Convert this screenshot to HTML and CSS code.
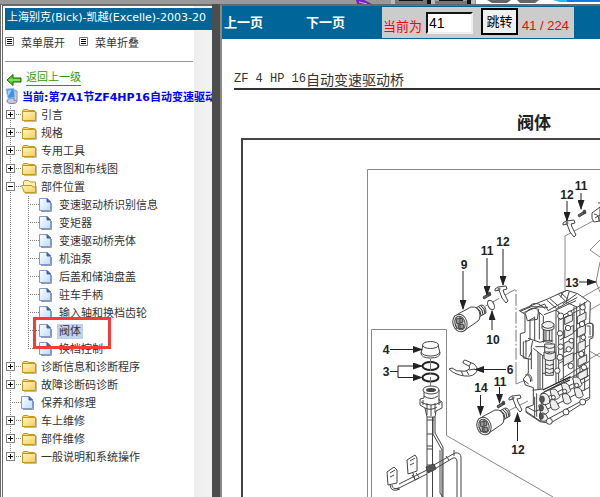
FILE: index.html
```html
<!DOCTYPE html>
<html lang="zh-CN">
<head>
<meta charset="UTF-8">
<meta name="viewport" content="width=device-width, initial-scale=1.0">
<title>上海别克(Bick)-凯越(Excelle)</title>
<link rel="stylesheet" href="styles.css">
</head>
<body>

<!-- shared icons -->
<svg class="defs" width="0" height="0" aria-hidden="true">
  <defs>
    <linearGradient id="gold" x1="0" y1="0" x2="1" y2="1">
      <stop offset="0" stop-color="#fff8c4"/>
      <stop offset="1" stop-color="#f7cb55"/>
    </linearGradient>
    <linearGradient id="sheet" x1="0" y1="0" x2="1" y2="1">
      <stop offset="0" stop-color="#ffffff"/>
      <stop offset="1" stop-color="#bcdcfb"/>
    </linearGradient>
  </defs>
  <symbol id="folder" viewBox="0 0 18 18">
    <path d="M3 15.5h12.500V6" fill="none" stroke="#bbb"/>
    <path d="M1.500 5l1-1.500h4L8 4.500h5.500v10h-12z" fill="#f6d878" stroke="#c9971e"/>
    <path d="M1.500 5.500h13v9h-13z" fill="url(#gold)" stroke="#c9971e"/>
  </symbol>
  <symbol id="folder-open" viewBox="0 0 18 18">
    <path d="M4 15.5h11.500V8" fill="none" stroke="#bbb"/>
    <path d="M2.500 13V4l1-1.500h4L9 4h5.500v10h-10z" fill="#fff3b0" stroke="#c9971e"/>
    <path d="M.500 7.500h10.500l1 1.500h2.500v5.500h-11z" fill="url(#gold)" stroke="#c9971e"/>
  </symbol>
  <symbol id="page" viewBox="0 0 18 18">
    <path d="M2 15.500h10.500V7" fill="none" stroke="#999"/>
    <path d="M.500 2.500h7.500l3.500 3.500v8.500h-11z" fill="url(#sheet)" stroke="#7d9cc9"/>
    <path d="M8 2.500v3.500h3.500z" fill="#3d62a8" stroke="#3d62a8"/>
  </symbol>
  <symbol id="list" viewBox="0 0 9 9">
    <path d="M.500.500h8v8h-8z" fill="#fff" stroke="#777"/>
    <path d="M2 2.500h5M2 4.500h5M2 6.500h5" stroke="#000"/>
  </symbol>
  <symbol id="back" viewBox="0 0 16 14">
    <path d="M1 7l6-5.500v3.500h8v4H7v3.500z" fill="#55d62c" stroke="#1c5c0c"/>
    <path d="M3 7h11" stroke="#9bf06c"/>
  </symbol>
  <symbol id="computer" viewBox="0 0 14 18">
    <ellipse cx="7" cy="14" rx="5" ry="2.500" fill="#c9cbe0" stroke="#777a9c"/>
    <path d="M10 3l2 1v9l-3 1z" fill="#cfd3df" stroke="#8b92a5"/>
    <path d="M1 2l8-.500 1 9-7 1z" fill="#3c93ea" stroke="#a9bfda"/>
    <path d="M2.500 3.500l4-.500-3 6z" fill="#9fd4ff"/>
  </symbol>
</svg>

<div class="topstrip">
  <svg width="600" height="4" viewBox="0 0 600 4" aria-hidden="true">
    <path d="M356 0h8l8 4h-15z" fill="#7a1fc4"/>
    <path d="M359 2l8 2" stroke="#d9b3ff"/>
    <path d="M391 0h39v4h-39z" fill="#bbb"/>
    <path d="M395 0h32v4h-32z" fill="#777"/>
    <path d="M399 0h24v1h-24zM427 0h4v4h-4zM439 0h24v1h-24zM467 0h4v4h-4z" fill="#111"/>
    <path d="M431 0h4v4h-4zM471 0h4v4h-4z" fill="#bbb"/>
    <path d="M435 1h32v3h-32z" fill="#777"/>
    <path d="M476 0h124v4H476z" fill="#fff"/>
    <path d="M487 0h24l-4 3h-15zM517 0h22l-4 3h-15z" fill="#666"/>
    <path d="M553 0h47v2h-40z" fill="#27b9e8"/>
    <path d="M567 0h33v2h-33z" fill="#1379dd"/>
  </svg>
</div>

<div class="frames">
  <nav class="sidebar">
    <div class="sidebar-body">
      <div class="car">上海别克(Bick)-凯越(Excelle)-2003-20</div>
      <div class="menu-actions">
        <a href="#"><svg width="9" height="9"><use href="#list"/></svg>菜单展开</a>
        <a href="#"><svg width="9" height="9"><use href="#list"/></svg>菜单折叠</a>
      </div>
      <div class="up">
        <svg width="16" height="14"><use href="#back"/></svg>
        <a href="#">返回上一级</a>
      </div>
      <div class="current">
        <svg width="14" height="18"><use href="#computer"/></svg>
        <a href="#">当前:第7A1节ZF4HP16自动变速驱动</a>
      </div>
      <ul class="tree">
        <li><span class="join"><button class="toggle plus" aria-label="展开"></button></span><svg class="icon"><use href="#folder"/></svg><a href="#">引言</a></li>
        <li><span class="join"><button class="toggle plus" aria-label="展开"></button></span><svg class="icon"><use href="#folder"/></svg><a href="#">规格</a></li>
        <li><span class="join"><button class="toggle plus" aria-label="展开"></button></span><svg class="icon"><use href="#folder"/></svg><a href="#">专用工具</a></li>
        <li><span class="join"><button class="toggle plus" aria-label="展开"></button></span><svg class="icon"><use href="#folder"/></svg><a href="#">示意图和布线图</a></li>
        <li><span class="join"><button class="toggle" aria-label="折叠"></button></span><svg class="icon"><use href="#folder-open"/></svg><a href="#">部件位置</a>
          <ul>
            <li><span class="join"></span><svg class="icon"><use href="#page"/></svg><a href="#">变速驱动桥识别信息</a></li>
            <li><span class="join"></span><svg class="icon"><use href="#page"/></svg><a href="#">变矩器</a></li>
            <li><span class="join"></span><svg class="icon"><use href="#page"/></svg><a href="#">变速驱动桥壳体</a></li>
            <li><span class="join"></span><svg class="icon"><use href="#page"/></svg><a href="#">机油泵</a></li>
            <li><span class="join"></span><svg class="icon"><use href="#page"/></svg><a href="#">后盖和储油盘盖</a></li>
            <li><span class="join"></span><svg class="icon"><use href="#page"/></svg><a href="#">驻车手柄</a></li>
            <li><span class="join"></span><svg class="icon"><use href="#page"/></svg><a href="#">输入轴和换档齿轮</a></li>
            <li class="marked"><span class="join"></span><svg class="icon"><use href="#page"/></svg><a href="#" class="selected">阀体</a></li>
            <li><span class="join last"></span><svg class="icon"><use href="#page"/></svg><a href="#">换档控制</a></li>
          </ul>
        </li>
        <li><span class="join"><button class="toggle plus" aria-label="展开"></button></span><svg class="icon"><use href="#folder"/></svg><a href="#">诊断信息和诊断程序</a></li>
        <li><span class="join"><button class="toggle plus" aria-label="展开"></button></span><svg class="icon"><use href="#folder"/></svg><a href="#">故障诊断码诊断</a></li>
        <li><span class="join"></span><svg class="icon"><use href="#page"/></svg><a href="#">保养和修理</a></li>
        <li><span class="join"><button class="toggle plus" aria-label="展开"></button></span><svg class="icon"><use href="#folder"/></svg><a href="#">车上维修</a></li>
        <li><span class="join"><button class="toggle plus" aria-label="展开"></button></span><svg class="icon"><use href="#folder"/></svg><a href="#">部件维修</a></li>
        <li><span class="join last"><button class="toggle plus" aria-label="展开"></button></span><svg class="icon"><use href="#folder"/></svg><a href="#">一般说明和系统操作</a></li>
      </ul>
    </div>
  </nav>

  <div class="splitter"></div>

  <main class="viewer">
    <div class="toolbar">
      <a href="#">上一页</a>
      <a href="#">下一页</a>
      <form class="jump">
        <label for="page-no">当前为</label>
        <input type="text" id="page-no" value="41">
        <button type="button">跳转</button>
        <span class="count">41 / 224</span>
      </form>
    </div>

    <div class="paper">
      <div class="running-head"><span>ZF 4 HP 16</span>自动变速驱动桥</div>
      <h1>阀体</h1>
      <svg class="figure" width="600" height="500" viewBox="234 138 600 500" role="img" aria-label="阀体分解图">
        <defs>
          <marker id="arrow" viewBox="0 0 10 6" refX="9" refY="3" markerWidth="10" markerHeight="7" markerUnits="userSpaceOnUse" orient="auto" preserveAspectRatio="none">
            <path d="M0 0l10 3-10 3z" fill="#222"/>
          </marker>
          <g id="clip">
            <path d="M495 289l3-2 8-1 1 3-4 1 1 3 4 8-2 2-4-5-3-8-4 1z"/>
            <circle cx="499" cy="289" r="1"/>
          </g>
          <g id="screw">
            <path d="M483 297l5-3 1 2-5 3z" fill="#666"/>
            <path d="M488 293l2-1 1 3-2 1z" fill="#444"/>
          </g>
          <!-- solenoid body -->
          <g id="solenoid">
            <path d="M474 309l7-4q5 0 5 8l-7 4z" fill="#ddd"/>
            <path d="M477 308q4 2 4 8M479 307q4 2 4 8M481 306q4 2 4 8" fill="none"/>
            <path d="M458 314l13-7q8-1 9 8 0 5-2 6l-13 9z"/>
            <ellipse cx="460" cy="323" rx="7" ry="9" transform="rotate(-18 460 323)"/>
            <ellipse cx="460" cy="323" rx="5" ry="7" transform="rotate(-18 460 323)" fill="#ccc"/>
            <path d="M456 319l6-1 1 4-6 2zM458 325l5-1 1 4-5 1z" fill="#999"/>
            <path d="M455 324l2 5M460 317v12" fill="none"/>
          </g>
        </defs>

        <!-- frames -->
        <path d="M242 638V139h592" class="frame"/>
        <path d="M367.500 638V169.500H834" class="thin"/>
        <path d="M371.500 638V329.500h75v106L553 497" class="thin"/>

        <!-- assembly axes -->
        <path d="M473 313l43-24v72" class="dash"/>
        <path d="M516 362v22l12-5M496 417l32-16M565 290v-54l28-15M600 240l-10 10 10 7M564 308l36-21M578 317l22-13M584 348l16 9M584 362l16-9M600 262l-4 20 4 10" class="thin"/>

        <use href="#solenoid" class="part"/>
        <use href="#solenoid" x="24" y="103" class="part"/>
        <use href="#clip" class="part"/>
        <use href="#clip" x="68" y="-66" class="part"/>
        <use href="#clip" x="14" y="109" class="part"/>
        <use href="#screw" class="part"/>
        <use href="#screw" x="95" y="-82" class="part"/>
        <use href="#screw" x="14" y="109" class="part"/>
        <ellipse cx="491" cy="305" rx="3" ry="5" transform="rotate(-25 491 305)" class="part"/>

        <!-- solenoid cut by the right edge -->
        <path d="M592 213l8-6v14l-6 1q-3-3-2-9z" class="part"/>
        <path d="M594 214q5 0 5 7M595 218l5-3M600 203h-2" class="part"/>

        <!-- cap 4 and rings 3 -->
        <path d="M423 345l-2 8q0 5 9.500 5t9.500-5l-2-8z" class="part"/>
        <ellipse cx="430.500" cy="345" rx="8" ry="3.500" class="part"/>
        <path d="M421 352q2 4 9.500 4t9.500-4" class="part"/>
        <ellipse cx="430.500" cy="366" rx="8" ry="4" class="ring"/>
        <ellipse cx="430.500" cy="377.500" rx="8" ry="4" class="ring"/>
        <path d="M430.500 359v27" class="dash"/>

        <!-- fork 6 -->
        <path d="M449 369l3-1q5 4 9 3 4 1 7-1 3-2 1-4l-6-3q0-3 2-3l9 4q4 3 3 7-3 6-12 5-10-1-16-7z" class="part"/>
        <path d="M461 371l2 4M466 370l3 5M471 363l-2 3M469 370l6-1" class="part"/>

        <!-- connector and wiring harness -->
        <path d="M424 390v8l-4 1v6l5 3 2 9h8l1-6 6-3v-6l-3-2v-10z" class="part"/>
        <ellipse cx="431" cy="390" rx="8" ry="4" class="part"/>
        <ellipse cx="431" cy="390" rx="5" ry="2" fill="#444"/>
        <path d="M424 396q7 5 14 0M421 402q10 6 20 0M425 408q6 3 12-1M427 403v12M431 405v11M435 403v10M423 400v5M439 399v6" class="part"/>
        <path d="M427 417v80M432.500 417v80M427 420h7M427 434h5M427 446h5M427 449h5M427 465h5" class="part"/>
        <path d="M433 417v17l9 16v47M435 417v16l8 14v50M440 450v43l3 4" class="part"/>
        <path d="M399 484l28-14M397 489l30-15M432 466l23-13q6-1 6 5v39M433 470l20-12q4-1 4 4v35" class="part"/>
        <path d="M412 475l3 4M416 473l3 4M446 456l3 4M454 450v6" class="part"/>
        <path d="M426 467l8-3 2 5-8 4z" class="part dark"/>
        <path d="M407 460l8-5 2 3v13l-9 3zM410 461l5-3M410 465l4-2" class="part"/>
        <path d="M387 472l7-5 3 3v13l-9 2zM390 473l5-3M390 477l4-2" class="part"/>
        <path d="M413 473l2 7 4-2M392 485q0 5 7 3M390 485q1 8 10 4" class="part"/>

        <!-- valve body -->
        <g class="body" transform="translate(500 280) scale(.3333)">
          <path d="M58 92l50-21 35-14 34-16 24-10 32 10 38 26-2 62 10 4v40l-10 5v178l-68 44-51 30-30-5-42-28v-14l22-8v-52l-24-8-6-18 15-18v-42l-24-12v-64l14-4v-54z"/>
          <path d="M61 94l33-14 50 2M70 98l64-26 10 20 50-28M86 84q8-18 30-12l20 14M140 60l30 26 62-34M150 56l28 25M175 42l24 24M182 38l24 22M198 32q-14 4-16 20M208 34l-10 32 30 14M230 42l-42 30"/>
          <path d="M76 100q14-22 40-12l-4 30-30 4zM90 120v60l-16 6M104 110v72M112 92l18 16v80M118 98v80M132 104l36-14 20 18"/>
          <path d="M86 122l18-10M84 175l36 12 32-10M98 182l-4 20v66M106 200h34l18-12M96 212l-10 20M100 205l28 22v100l-30 4M128 227l22-10M128 280h24M114 216v112M120 222v106"/>
          <path d="M126 132q20-16 36 0v14q-18 12-36 0zM126 138q18 14 36 0M132 150v32h24v-32M138 152v30M148 152v30M130 182q14 10 30 0M134 192h30v24h-30zM134 200q15 10 30 0M132 216q16 12 34 0v20q-17 12-34 0zM136 240v46h24v-46M136 252q12 9 26 0M136 264q12 9 26 0M136 276q12 9 26 0" class="soft"/>
          <path d="M168 90v220M176 94v215M190 106v196M222 80v240M230 78v240M240 70v252M254 66v266M168 90l60-28M190 106l72-42M178 120l60-30M180 180l84-50M178 250l88-54M180 300l88-56"/>
          <path d="M194 114l24-12v20l-24 12zM194 150l26-14v24l-26 14zM192 190l28-14v28l-28 14zM190 232l30-14v24l-30 16zM232 110l26-14v22l-26 14zM232 146l24-12v26l-24 12zM234 190l22-10v26l-22 12zM234 238l26-14v22l-26 14zM234 280l28-16v26l-28 14z" class="soft"/>
          <path d="M264 130h12l3 5v30l-4 6h-10M260 138h10v28M70 184v50l24 4M78 180v50"/>
          <circle cx="182" cy="108" r="9"/><circle cx="210" cy="100" r="7"/><circle cx="248" cy="82" r="8"/><circle cx="204" cy="144" r="8"/><circle cx="246" cy="132" r="8"/><circle cx="180" cy="160" r="8"/><circle cx="214" cy="182" r="7"/><circle cx="250" cy="172" r="7"/><circle cx="206" cy="208" r="8"/><circle cx="244" cy="222" r="8"/><circle cx="180" cy="232" r="9"/><circle cx="212" cy="258" r="8"/><circle cx="252" cy="262" r="8"/><circle cx="172" cy="272" r="8"/><circle cx="182" cy="200" r="8"/>
          <path d="M128 330l84-40M132 336l78-36" class="heavy"/>
          <path d="M122 342l144-78M126 360l142-74M122 376l146-78M118 400l150-78M130 424l136-72M80 380l24 14 24-8M78 394l44 30M104 350v62M110 340v70M70 300l16 12M76 284q16 0 16 22M84 282q12 4 12 22"/>
          <path d="M120 346q12-12 24 0l8 18q-10 14-26 8zM150 330q14-8 22 4l8 16q-10 14-24 4zM184 312q14-8 22 4l6 16q-10 14-22 4zM218 294q14-8 22 4l6 16q-10 14-22 4zM116 376q12-10 22 2l8 16q-8 14-24 6zM148 362q14-8 22 4l8 16q-10 14-24 4zM186 344q14-8 22 4l6 16q-10 14-22 4zM222 326q14-8 22 4l6 16q-10 14-22 4zM118 402q12-8 20 2l6 12q-6 12-22 6z" class="soft"/>
          <ellipse cx="126" cy="358" rx="7" ry="10" class="dark"/><ellipse cx="124" cy="384" rx="6" ry="9" class="dark"/><ellipse cx="124" cy="410" rx="6" ry="8" class="dark"/>
          <circle cx="148" cy="424" r="9"/><circle cx="198" cy="396" r="9"/><circle cx="248" cy="366" r="9"/><circle cx="160" cy="352" r="6"/><circle cx="194" cy="334" r="6"/><circle cx="230" cy="316" r="6"/>
        </g>

        <!-- callouts -->
        <g class="lead">
          <path d="M581 193v16"/>
          <path d="M567 201v20"/>
          <path d="M503 249v36"/>
          <path d="M487 258v37"/>
          <path d="M463 271v38"/>
          <path d="M492 330v-19"/>
          <path d="M579 282h17"/>
          <path d="M390 349.500h32"/>
          <path d="M398 371v-5h24"/>
          <path d="M398 371v6.500h24"/>
          <path d="M506 369.500h-31"/>
          <path d="M499.500 387v16"/>
          <path d="M480.500 395v20"/>
          <path d="M517.500 441v-28"/>
        </g>
        <path d="M390 371.500h8" stroke="#222"/>
        <g class="num">
          <text x="581" y="190">11</text>
          <text x="567" y="199">12</text>
          <text x="503" y="246">12</text>
          <text x="487" y="255">11</text>
          <text x="464" y="269">9</text>
          <text x="493" y="344">10</text>
          <text x="572" y="287">13</text>
          <text x="386" y="354">4</text>
          <text x="386" y="376">3</text>
          <text x="510" y="374">6</text>
          <text x="500" y="386">11</text>
          <text x="481" y="392">14</text>
          <text x="518" y="454">12</text>
        </g>
      </svg>
    </div>
  </main>
</div>

</body>
</html>
```

FILE: styles.css
```css
*,
*::after {
  box-sizing: border-box;
}
body {
  margin: 0;
  height: 100vh;
  display: flex;
  flex-direction: column;
  overflow: hidden;
  background: #999;
  color: #333;
  font-family: "DejaVu Sans", "Noto Sans CJK SC", sans-serif;
  font-size: 11px;
}
a {
  color: inherit;
  text-decoration: none;
}
svg {
  display: block;
  flex: none;
}
.defs {
  position: absolute;
}
.topstrip {
  height: 4px;
  flex: none;
  overflow: hidden;
}
.frames {
  flex: 1;
  min-height: 0;
  display: flex;
}

/* left menu */
.sidebar {
  width: 212px;
  flex: none;
  overflow: hidden;
  white-space: nowrap;
  border-top: 2px solid #696969;
  border-left: 3px double #696969;
  background: linear-gradient(90deg, #eee, #f2f2f2) right / 18px 100% no-repeat #fff;
}
.sidebar-body {
  padding: 2px 0 0 2px;
}
.car {
  height: 22px;
  padding-left: 2px;
  line-height: 20px;
  background: #069;
  color: #fff;
}
.menu-actions {
  display: flex;
  gap: 14px;
  width: 188px;
  height: 32px;
  margin-bottom: 7px;
  padding-bottom: 8px;
  border-bottom: 1px solid #999;
}
.menu-actions a {
  display: flex;
  align-items: center;
  gap: 7px;
}
.up,
.current {
  display: flex;
  align-items: center;
  height: 18px;
}
.up {
  gap: 4px;
  padding-left: 1px;
  color: #390;
}
.up svg {
  align-self: flex-end;
}
.up a {
  line-height: 14px;
  border-bottom: 1px solid #390;
}
.current {
  gap: 3px;
  color: #00f;
  font-weight: bold;
}

/* tree */
.tree,
.tree ul {
  list-style: none;
  margin: 0;
  padding: 0;
}
.tree {
  padding-top: 1px;
}
.tree li {
  display: flex;
  flex-wrap: wrap;
  align-items: center;
}
.tree ul {
  width: 100%;
  padding-left: 18px;
  background: repeating-linear-gradient(#808080 0 1px, transparent 1px 2px) 5px 0 / 1px 100% no-repeat;
}
.join {
  width: 16px;
  height: 18px;
  padding: 4px 0 0 1px;
  background:
    repeating-linear-gradient(#808080 0 1px, transparent 1px 2px) 5px 0 / 1px 100% no-repeat,
    repeating-linear-gradient(90deg, #808080 0 1px, transparent 1px 2px) 5px 8px / 11px 1px no-repeat;
}
.join.last {
  background-size: 1px 9px, 11px 1px;
}
.toggle {
  display: block;
  width: 9px;
  height: 9px;
  padding: 0;
  border: 1px solid #808080;
  background: linear-gradient(#000, #000) center / 5px 1px no-repeat #fff;
}
.toggle.plus {
  background:
    linear-gradient(#000, #000) center / 5px 1px no-repeat,
    linear-gradient(#000, #000) center / 1px 5px no-repeat #fff;
}
.icon {
  width: 18px;
  height: 18px;
}
.tree a {
  padding: 0 2px;
  line-height: 15px;
}
.marked {
  position: relative;
}
.marked::after {
  content: "";
  position: absolute;
  top: -5px;
  left: 10px;
  width: 78px;
  height: 32px;
  border: 3px solid #f93a37;
  pointer-events: none;
}
.tree .selected {
  background: #c1d2ee;
}

.splitter {
  width: 8px;
  flex: none;
  background: #4d4d4d;
}

/* right side */
.viewer {
  flex: 1;
  min-width: 0;
  overflow: hidden;
  border-top: 2px solid #696969;
  border-left: 2px solid #888;
  background: #fff;
}
.toolbar {
  display: flex;
  align-items: center;
  height: 33px;
  padding-left: 2px;
  background: #069;
  color: #fff;
}
.toolbar a {
  width: 82px;
  padding-bottom: 2px;
  font-size: 13px;
  font-weight: bold;
}
.jump {
  display: flex;
  align-items: center;
  height: 31px;
  margin-left: -6px;
  padding: 0 5px 0 1px;
  background: #ccc;
  color: #f00;
  font-family: "Liberation Sans", "Noto Sans CJK SC", sans-serif;
  font-size: 13px;
}
.jump label,
.count {
  padding-top: 6px;
}
.jump input {
  width: 47px;
  height: 22px;
  margin: 0 8px 0 4px;
  padding: 1px;
  border: 2px inset #808080;
  border-color: #696969 #eee #eee #696969;
  background: #fff;
  font: 14px "Liberation Sans", sans-serif;
}
.jump button {
  width: 37px;
  height: 27px;
  align-self: flex-start;
  margin: 1px 4px 0 0;
  padding: 0 0 2px;
  border: 1px solid #000;
  outline: 1px solid #000;
  outline-offset: -2px;
  background: #f0f0f0;
  color: #000;
  font: 13px "Liberation Sans", "Noto Sans CJK SC", sans-serif;
}

/* scanned manual page */
.paper {
  width: max-content;
  padding: 32px 12px 0;
}
.running-head {
  display: flex;
  align-items: center;
  height: 19px;
  border-bottom: 2px solid #333;
  font-family: "Noto Sans CJK SC", sans-serif;
  font-size: 14px;
  line-height: 17px;
}
.running-head span {
  font-family: "Liberation Mono", monospace;
  font-size: 12px;
}
.paper h1 {
  margin: 0;
  padding: 20px 0 4px;
  color: #222;
  text-align: center;
  font: bold 17px/24px "Noto Sans CJK SC", sans-serif;
}
.figure .frame {
  fill: none;
  stroke: #444;
  stroke-width: 2;
}
.figure .thin {
  fill: none;
  stroke: #888;
}
.figure .dash {
  fill: none;
  stroke: #777;
  stroke-dasharray: 12 2 2 2;
}
.figure .part {
  fill: #fff;
  stroke: #444;
  stroke-width: 1;
}
.figure path.part:not([d*="z"]) {
  fill: none;
}
.figure .ring {
  fill: none;
  stroke: #222;
  stroke-width: 2;
}
.figure .dark {
  fill: #555;
}
.body {
  fill: none;
  stroke: #444;
  stroke-width: 3;
}
.body path:first-child {
  fill: #fff;
}
.body .soft {
  fill: #eee;
}
.body circle {
  fill: #fff;
}
.body .heavy {
  stroke-width: 4;
  stroke: #222;
}
.lead path {
  fill: none;
  stroke: #222;
  marker-end: url(#arrow);
}
.num {
  fill: #222;
  text-anchor: middle;
  font: bold 12px "Liberation Sans", sans-serif;
}
```
